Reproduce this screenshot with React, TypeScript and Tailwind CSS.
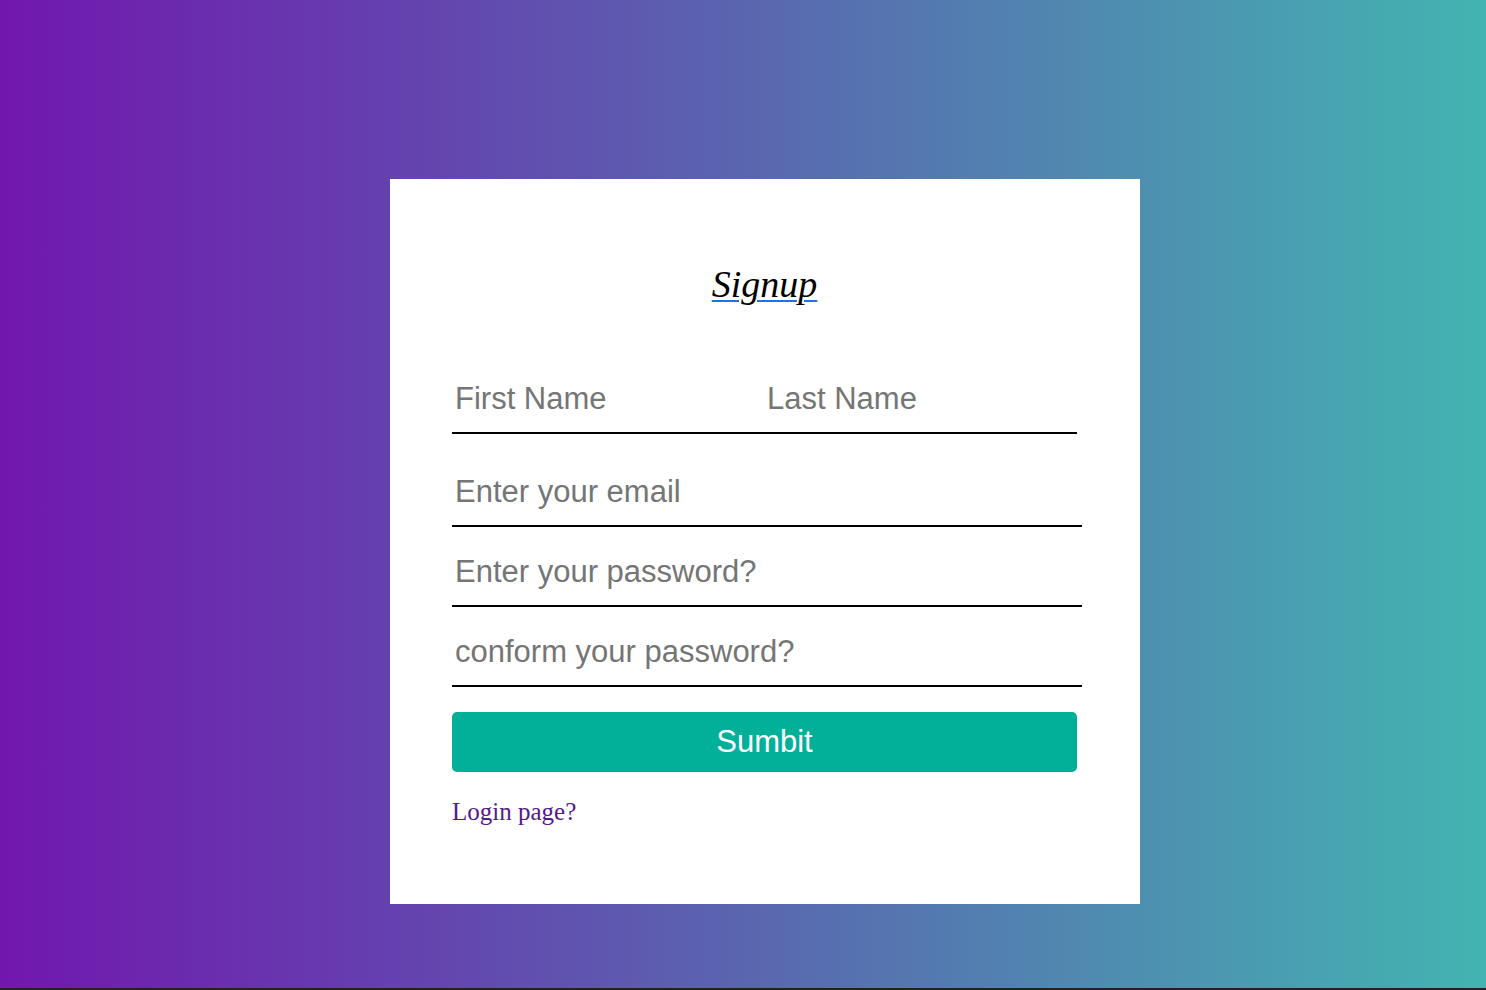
import React from "react";

export default function App() {
  const inputCls =
    "w-[630px] h-[60px] border-0 border-b-2 border-black outline-none bg-transparent px-[3px] pb-[8px] text-[31px] text-black placeholder:text-[#757575]";
  return (
    <div className="w-full h-[990px] bg-[linear-gradient(to_right,#7117ae,#43b4b1)] border-b-2 border-[#222] flex flex-col items-start pt-[179px] pl-[390px] font-['Liberation_Sans',Arial,sans-serif]">
      <div className="w-[750px] h-[725px] bg-white pl-[62px] pt-[77px]">
        <div className="w-[625px] text-center">
          <span className="text-[38px] italic underline decoration-[#1a73e8] decoration-2 underline-offset-[3px] text-black font-['Liberation_Serif',serif]">
            Signup
          </span>
        </div>
        <form className="flex flex-col mt-[55px]">
          <div className="flex w-[625px] border-b-2 border-black">
            <input
              className="w-[312px] h-[64px] border-0 outline-none bg-transparent px-[3px] pb-[2px] text-[31px] placeholder:text-[#757575]"
              placeholder="First Name"
            />
            <input
              className="w-[313px] h-[64px] border-0 outline-none bg-transparent px-[3px] pb-[2px] text-[31px] placeholder:text-[#757575]"
              placeholder="Last Name"
            />
          </div>
          <input className={inputCls + " mt-[33px]"} placeholder="Enter your email" />
          <input className={inputCls + " mt-[20px]"} placeholder="Enter your password?" />
          <input className={inputCls + " mt-[20px]"} placeholder="conform your password?" />
          <button
            type="button"
            className="mt-[25px] w-[625px] h-[60px] rounded-[5px] bg-[#02b09a] text-white text-[31px]"
          >
            Sumbit
          </button>
          <a
            href="#"
            className="mt-[21px] text-[25px] text-[#551a8b] w-fit font-['Liberation_Serif',serif]"
          >
            Login page?
          </a>
        </form>
      </div>
    </div>
  );
}
